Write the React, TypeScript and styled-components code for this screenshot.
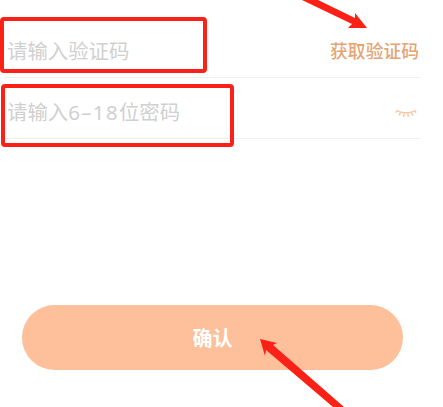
import styled, { createGlobalStyle } from 'styled-components';

const GlobalStyle = createGlobalStyle`
  html, body {
    margin: 0;
    background: #fff;
    font-family: "Liberation Sans", "Noto Sans CJK SC", sans-serif;
  }
`

export default function App() {
  return (
    <>
      <GlobalStyle />
      <Page>
        <Form>
          <Row>
            <Placeholder>请输入验证码</Placeholder>
            <CodeLink>获取验证码</CodeLink>
          </Row>
          <Row>
            <Placeholder>请输入<Digits>6–18</Digits>位密码</Placeholder>
            <EyeIcon viewBox="0 0 20 9">
              <path d="M1 1.5C5 4.5 15 4.5 19 1.5" />
              <path d="M4.5 3.6L3 6.5M8.2 4.6L7.6 7.8M11.8 4.6L12.4 7.8M15.5 3.6L17 6.5M1 1.5L0 3.6M19 1.5L20 3.6" />
            </EyeIcon>
          </Row>
        </Form>
        <ConfirmButton>确认</ConfirmButton>

        <Highlight $left={0} $top={17} $width={207} $height={56} />
        <Highlight $left={1} $top={84} $width={233} $height={63} />
        <Annotation viewBox="0 0 443 407">
          <polygon points="302,0 318,0 355,18 355,13 367,28 348,28 352,24" />
          <polygon points="260,339 277,343 273,345 344,407 333,407 266,350 265,356" />
        </Annotation>
      </Page>
    </>
  )
}

const Page = styled.div`
  position: relative;
  width: 443px;
  height: 407px;
  overflow: hidden;
  padding-top: 17px;
  box-sizing: border-box;
`
const Form = styled.div`
  margin: 0 23px 0 5px;
`
const Row = styled.div`
  display: flex;
  align-items: center;
  justify-content: space-between;
  height: 61px;
  padding: 6px 1px 0 2px;
  box-sizing: border-box;
  border-bottom: 1px solid #f0f0f0;
`
const Placeholder = styled.span`
  font-size: 20.4px;
  color: #d0d0d0;
`
const Digits = styled.span`
  font-family: "Noto Sans", sans-serif;
  letter-spacing: 1.4px;
`
const CodeLink = styled.span`
  font-size: 17.8px;
  font-weight: 500;
  color: #e5a472;
`
const EyeIcon = styled.svg`
  width: 20px;
  height: 9px;
  margin: 5px 3px 0 0;
  overflow: visible;
  fill: none;
  stroke: #f5c4a2;
  stroke-width: 1.4;
`
const ConfirmButton = styled.button`
  display: block;
  width: 381px;
  height: 65px;
  margin: 166px 0 0 22px;
  padding: 0;
  border: none;
  border-radius: 33px;
  background: #fec09a;
  color: #fff;
  font-family: inherit;
  font-size: 20px;
  font-weight: 700;
`
const Highlight = styled.div<{ $left: number; $top: number; $width: number; $height: number }>`
  position: absolute;
  left: ${p => p.$left}px;
  top: ${p => p.$top}px;
  width: ${p => p.$width}px;
  height: ${p => p.$height}px;
  box-sizing: border-box;
  border: 4px solid #fb2116;
  border-radius: 4px;
`
const Annotation = styled.svg`
  position: absolute;
  left: 0;
  top: 0;
  width: 443px;
  height: 407px;
  fill: #fb2116;
`
